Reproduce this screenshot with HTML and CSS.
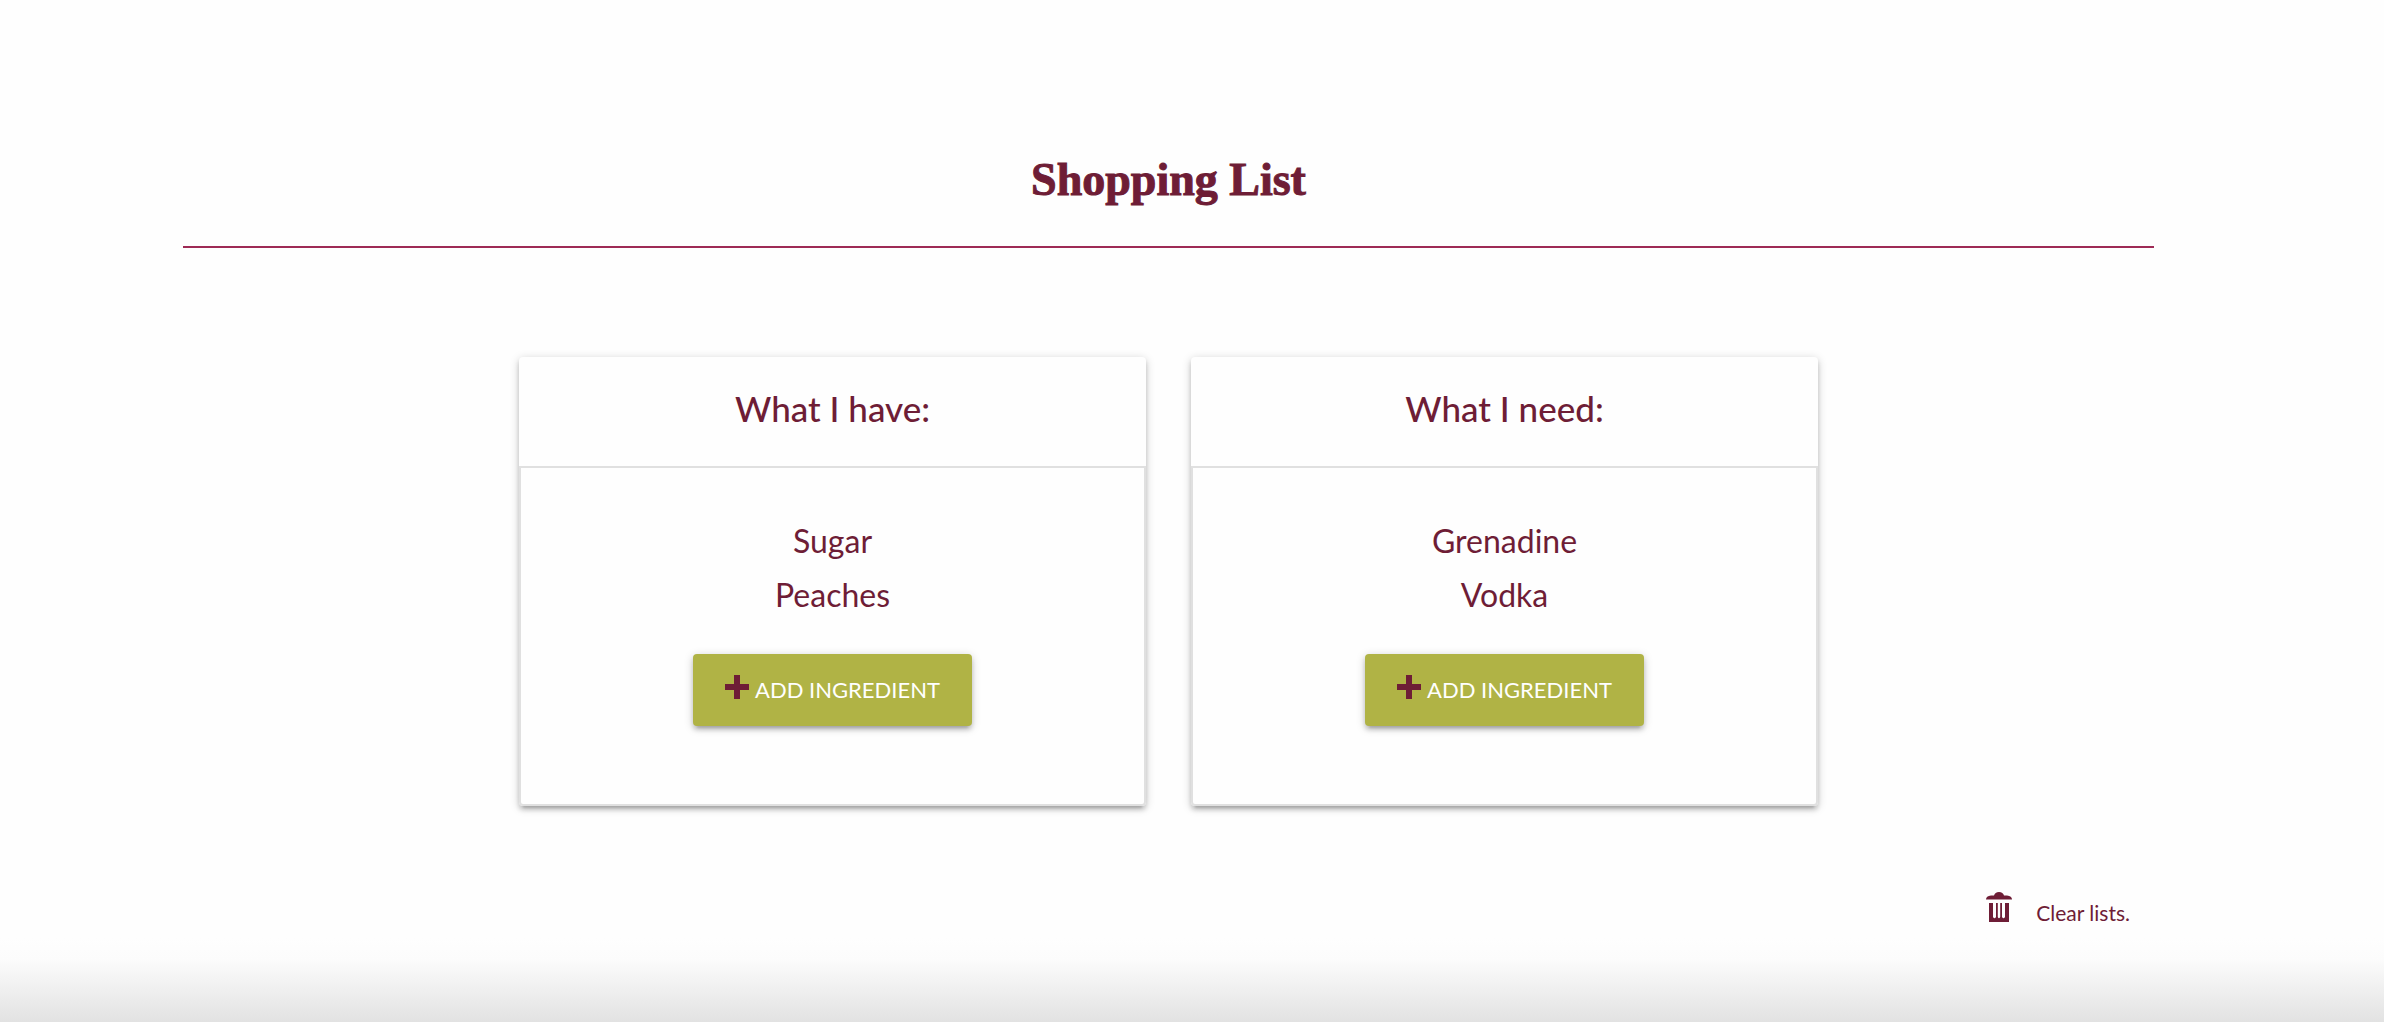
FILE: index.html
```html
<!DOCTYPE html>
<html lang="en">
<head>
<meta charset="utf-8">
<meta name="viewport" content="width=device-width, initial-scale=1">
<title>Shopping List</title>
<link rel="stylesheet" href="styles.css">
</head>
<body>
<main class="page">
  <h1 class="title">Shopping List</h1>
  <div class="lists">
    <section class="card">
      <h2 class="card-header">What I have:</h2>
      <div class="card-body">
        <ul class="items">
          <li>Sugar</li>
          <li>Peaches</li>
        </ul>
        <button class="add" type="button">
          <svg class="plus" viewBox="0 0 24 24" aria-hidden="true"><path d="M9 0h6v9h9v6h-9v9H9v-9H0V9h9z"/></svg>
          <span>ADD INGREDIENT</span>
        </button>
      </div>
    </section>
    <section class="card">
      <h2 class="card-header">What I need:</h2>
      <div class="card-body">
        <ul class="items">
          <li>Grenadine</li>
          <li>Vodka</li>
        </ul>
        <button class="add" type="button">
          <svg class="plus" viewBox="0 0 24 24" aria-hidden="true"><path d="M9 0h6v9h9v6h-9v9H9v-9H0V9h9z"/></svg>
          <span>ADD INGREDIENT</span>
        </button>
      </div>
    </section>
  </div>
  <a class="clear" href="#">
    <svg class="trash" viewBox="0 0 26 30" aria-hidden="true"><path d="M0 7.500Q0 4 5 3.500H8Q9 0 13 0T18 3.500H21Q26 4 26 7.500zM3 11H7V25Q8.500 27.500 10 25V11H11.800V25Q13 27.500 14.200 25V11H16V25Q17.500 27.500 19 25V11H23V30H3z"/></svg>
    <span>Clear lists.</span>
  </a>
</main>
<footer class="fade"></footer>
</body>
</html>
```
FILE: styles.css
```css
* {
  box-sizing: border-box;
}

body {
  display: flex;
  flex-direction: column;
  min-height: 100vh;
  margin: 0;
  background: #fefefe;
  color: #6e1d36;
  font-family: Lato, "Open Sans", sans-serif;
}

.page {
  margin: 0 230px 0 183px;
}

.title {
  margin: 0;
  padding: 150px 0 36px;
  border-bottom: 2px solid #9e2a55;
  font-family: "Liberation Serif", "Times New Roman", serif;
  font-size: 46px;
  font-weight: 700;
  line-height: 60px;
  text-align: center;
  -webkit-text-stroke: 1px currentColor;
}

.lists {
  display: grid;
  grid-template-columns: 1fr 1fr;
  gap: 45px;
  max-width: 1299px;
  margin: 109px auto 0;
}

.card {
  border-radius: 4px;
  background: #fefefe;
  box-shadow: 0 4px 4px rgba(0, 0, 0, 0.14), 0 6px 2px -4px rgba(0, 0, 0, 0.12), 0 2px 10px rgba(0, 0, 0, 0.2);
  text-align: center;
}

.card-header {
  margin: 0;
  padding: 27px 20px 34px;
  font-size: 35px;
  font-weight: 500;
  line-height: 48px;
}

.card-body {
  padding: 46px 20px 78px;
  border: 2px solid #e0e0e0;
  border-radius: 0 0 4px 4px;
}

.items {
  margin: 0 0 32px;
  padding: 0;
  list-style: none;
  font-size: 32px;
  line-height: 54px;
}

.add {
  display: inline-flex;
  align-items: center;
  gap: 6px;
  height: 72px;
  padding: 0 32px 2px;
  border: 0;
  border-radius: 4px;
  background: #b0b345;
  box-shadow: 0 4px 4px rgba(0, 0, 0, 0.14), 0 6px 2px -4px rgba(0, 0, 0, 0.12), 0 2px 10px rgba(0, 0, 0, 0.2);
  color: #fff;
  font: inherit;
  font-size: 22px;
  vertical-align: top;
  cursor: pointer;
}

.plus {
  width: 24px;
  height: 24px;
  margin-bottom: 4px;
  fill: #6e1d36;
}

.clear {
  display: flex;
  justify-content: flex-end;
  gap: 24px;
  margin: 86px 24px 0 0;
  color: inherit;
  font-size: 21px;
  line-height: 42px;
  text-decoration: none;
}

.trash {
  width: 26px;
  height: 30px;
  fill: currentColor;
}

.fade {
  height: 84px;
  margin-top: auto;
  background: linear-gradient(#fefefe, #fcfcfc 25%, #e2e2e2);
}
```
